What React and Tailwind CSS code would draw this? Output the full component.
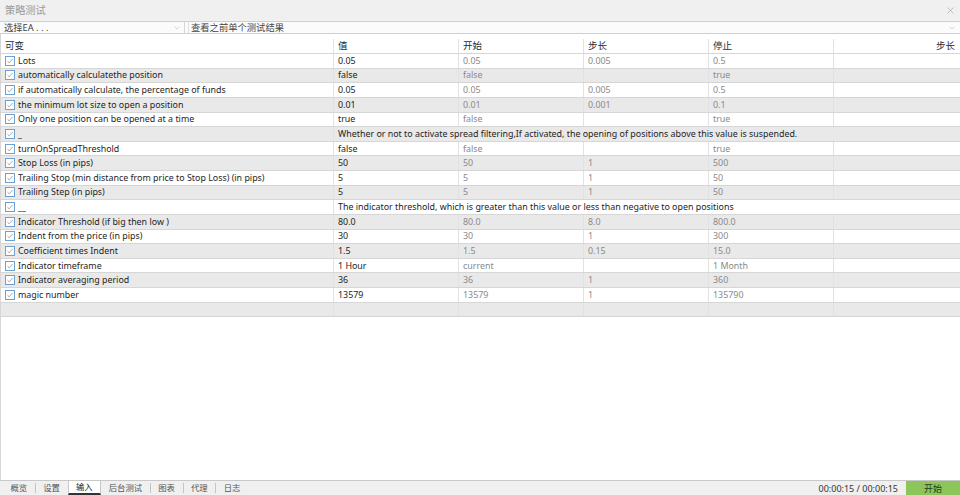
import { X, ChevronDown } from "lucide-react";

const rows = [
  { name: "Lots", value: "0.05", start: "0.05", step: "0.005", stop: "0.5" },
  { name: "automatically calculatethe position", value: "false", start: "false", step: "", stop: "true" },
  { name: "if automatically calculate, the percentage of funds", value: "0.05", start: "0.05", step: "0.005", stop: "0.5" },
  { name: "the minimum lot size to open a position", value: "0.01", start: "0.01", step: "0.001", stop: "0.1" },
  { name: "Only one position can be opened at a time", value: "true", start: "false", step: "", stop: "true" },
  {
    name: "_",
    note: "Whether or not to activate spread filtering,If activated, the opening of positions above this value is suspended.",
  },
  { name: "turnOnSpreadThreshold", value: "false", start: "false", step: "", stop: "true" },
  { name: "Stop Loss (in pips)", value: "50", start: "50", step: "1", stop: "500" },
  { name: "Trailing Stop (min distance from price to Stop Loss) (in pips)", value: "5", start: "5", step: "1", stop: "50" },
  { name: "Trailing Step (in pips)", value: "5", start: "5", step: "1", stop: "50" },
  {
    name: "__",
    note: "The indicator threshold, which is greater than this value or less than negative to open positions",
  },
  { name: "Indicator Threshold (if big then low )", value: "80.0", start: "80.0", step: "8.0", stop: "800.0" },
  { name: "Indent from the price (in pips)", value: "30", start: "30", step: "1", stop: "300" },
  { name: "Coefficient times Indent", value: "1.5", start: "1.5", step: "0.15", stop: "15.0" },
  { name: "Indicator timeframe", value: "1 Hour", start: "current", step: "", stop: "1 Month" },
  { name: "Indicator averaging period", value: "36", start: "36", step: "1", stop: "360" },
  { name: "magic number", value: "13579", start: "13579", step: "1", stop: "135790" },
];

const tabs = ["概览", "设置", "输入", "后台测试", "图表", "代理", "日志"];

const font = "[font-family:'Noto_Sans','Noto_Sans_CJK_SC',sans-serif]";
const cols = "grid grid-cols-[333px_125px_125px_125px_125px_1fr]";

function Check() {
  return (
    <span className="flex h-[10px] w-[10px] shrink-0 items-center justify-center border border-[#6fa0d2] bg-white">
      <svg width="8" height="8" viewBox="0 0 8 8">
        <path d="M1.5 4.2 L3.2 5.8 L6.6 2" fill="none" stroke="#9aa3ad" strokeWidth="0.9" />
      </svg>
    </span>
  );
}

function Cell({ children, dim, last }) {
  return (
    <div
      className={`flex items-center overflow-hidden whitespace-nowrap px-[4px] pt-[1px] ${
        last ? "" : "border-r border-[#e2e2e2]"
      } ${dim ? "text-[#8a8a8a]" : "text-[#1e1e1e]"}`}
    >
      {children}
    </div>
  );
}

function Row({ row, index }) {
  const bg = index % 2 === 0 ? "bg-white" : "bg-[#e9e9e9]";
  return (
    <div className={`${cols} h-[14.625px] border-b border-[#d6d6d6] ${bg}`}>
      <div className="flex items-center gap-[3px] overflow-hidden whitespace-nowrap border-r border-[#e2e2e2] pl-[4px] text-[#1e1e1e]">
        <Check />
        <span className="pt-[1px]">{row.name}</span>
      </div>
      {row.note ? (
        <div className="col-span-5 flex items-center whitespace-nowrap px-[4px] pt-[1px] text-[#1e1e1e]">{row.note}</div>
      ) : (
        <>
          <Cell>{row.value}</Cell>
          <Cell dim>{row.start}</Cell>
          <Cell dim>{row.step}</Cell>
          <Cell dim>{row.stop}</Cell>
          <Cell last />
        </>
      )}
    </div>
  );
}

export default function App() {
  return (
    <div className={`flex h-[495px] w-[960px] flex-col overflow-hidden bg-white text-[8.9px] leading-none ${font}`}>
      <div className="flex h-[21px] shrink-0 items-center justify-between bg-[#f0f0f0] pl-[5px] pr-[4px] text-[#9a9a9a]">
        <span className="text-[10.2px]">策略测试</span>
        <X size={11} strokeWidth={1.2} color="#9a9a9a" />
      </div>
      <div className="flex h-[13px] shrink-0 border-y border-[#cfcfcf] bg-[#fbfbfb] text-[9.3px]">
        <div className="flex w-[185px] items-center justify-between border-r border-[#d6d6d6] pl-[4px] pr-[3px] text-[#444]">
          <span>选择EA . . .</span>
          <ChevronDown size={8} strokeWidth={1.2} color="#9a9a9a" />
        </div>
        <div className="ml-[3px] flex flex-1 items-center justify-between border-l border-[#e0e0e0] pl-[2px] pr-[4px] text-[#444]">
          <span>查看之前单个测试结果</span>
          <ChevronDown size={8} strokeWidth={1.2} color="#9a9a9a" />
        </div>
      </div>
      <div className="flex flex-1 flex-col border-l border-[#d6d6d6] pt-[5px]">
        <div className={`${cols} h-[15px] border-b border-[#d6d6d6] text-[9.5px] text-[#2a2a2a]`}>
          <div className="flex items-center border-r border-[#e2e2e2] pl-[4px]">可变</div>
          <div className="flex items-center border-r border-[#e2e2e2] px-[4px]">值</div>
          <div className="flex items-center border-r border-[#e2e2e2] px-[4px]">开始</div>
          <div className="flex items-center border-r border-[#e2e2e2] px-[4px]">步长</div>
          <div className="flex items-center border-r border-[#e2e2e2] px-[4px]">停止</div>
          <div className="flex items-center justify-end px-[5px]">步长</div>
        </div>
        {rows.map((row, i) => (
          <Row key={i} row={row} index={i} />
        ))}
        <div className={`${cols} h-[14.625px] border-b border-[#d6d6d6] bg-[#e9e9e9]`}>
          <div className="border-r border-[#e2e2e2]" />
          <div className="border-r border-[#e2e2e2]" />
          <div className="border-r border-[#e2e2e2]" />
          <div className="border-r border-[#e2e2e2]" />
          <div className="border-r border-[#e2e2e2]" />
          <div />
        </div>
      </div>
      <div className="flex h-[15px] shrink-0 items-stretch border-t border-[#c8c8c8] bg-[#f0f0f0] text-[#555]">
        <div className="flex items-stretch pl-[3px] text-[8.4px]">
          {tabs.map((t, i) => (
            <div key={t} className="flex items-center">
              {i > 0 && tabs[i - 1] !== "输入" && t !== "输入" ? (
                <span className="h-[10px] border-l border-[#c4c4c4]" />
              ) : null}
              <span
                className={`flex h-full items-center px-[7.5px] ${
                  t === "输入" ? "border-x border-b-2 border-x-[#c8c8c8] border-b-[#333] bg-white text-[#222]" : ""
                }`}
              >
                {t}
              </span>
            </div>
          ))}
        </div>
        <div className="ml-auto flex items-center gap-[8px] text-[9px]">
          <span className="text-[#333]">00:00:15 / 00:00:15</span>
          <div className="flex h-full w-[54px] items-center justify-center bg-[#8cc65a] text-[#2a3a1a]">开始</div>
        </div>
      </div>
    </div>
  );
}
